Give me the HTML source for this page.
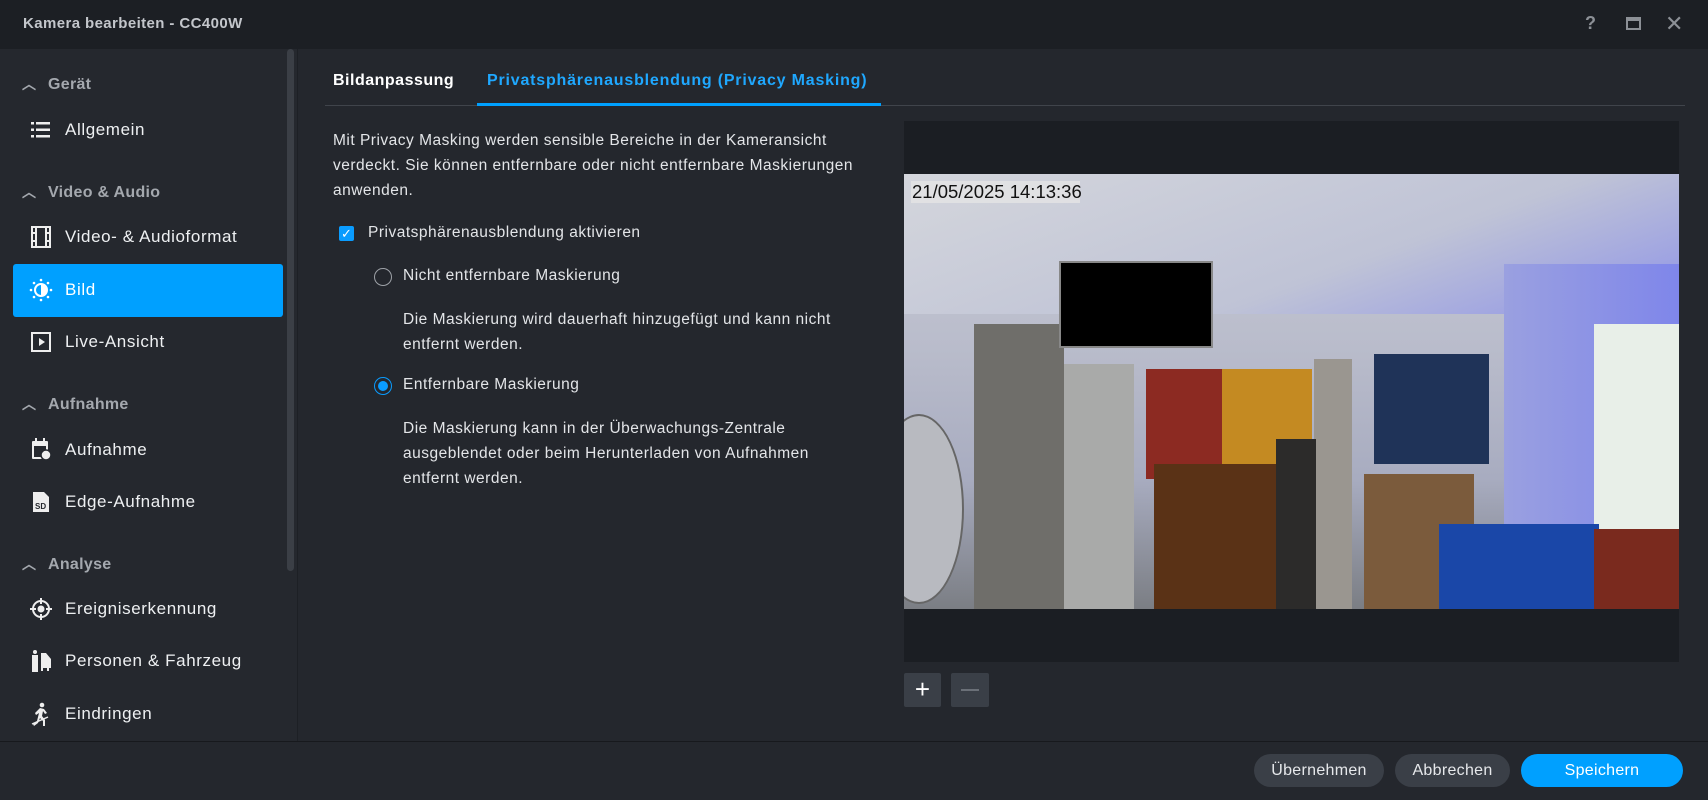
<!DOCTYPE html>
<html><head><meta charset="utf-8"><style>
*{margin:0;padding:0;box-sizing:border-box}
body{width:1708px;height:800px;overflow:hidden;background:#24272d;font-family:"Liberation Sans","DejaVu Sans",sans-serif;color:#e6e8eb;position:relative}
.a{position:absolute}
#title{left:0;top:0;width:1708px;height:49px;background:#1c1f24}
#title .t{left:23px;top:15px;font-size:15px;font-weight:bold;color:#c3c6cb;letter-spacing:0.4px}
#side{left:0;top:49px;width:298px;height:692px;background:#25282e;border-right:1px solid #1d2025}
.sb{left:287px;top:49px;width:7px;height:522px;background:#3b3f46;border-radius:4px}
.hdr{left:22px;font-size:16px;font-weight:bold;color:#a4a8ae;letter-spacing:0.3px}
.hdr span{display:inline-block;width:26px;color:#a4a8ae;font-size:14px}
.it{left:65px;font-size:17px;color:#eef0f2;letter-spacing:0.6px}
.ic{left:29px;width:24px;height:24px}
#sel{left:13px;top:264px;width:270px;height:53px;background:#00a0ff;border-radius:3px}
.c{font-size:15.5px;color:#e3e5e8;white-space:nowrap;letter-spacing:0.5px}
#foot{left:0;top:741px;width:1708px;height:59px;background:#24272d;border-top:1px solid #17191d}
.btn{top:754px;height:33px;border-radius:17px;font-size:16px;text-align:center;line-height:33px;color:#e6e8eb;background:#3a3f47;letter-spacing:0.3px}
</style></head><body>
<div id="title" class="a"><div class="t a">Kamera bearbeiten - CC400W</div>
<div class="a" style="left:1585px;top:13px;font-size:18px;font-weight:bold;color:#8c9096">?</div>
<div class="a" style="left:1626px;top:17px;width:15px;height:13px;border:2px solid #8c9096;border-top-width:4px"></div>
<div class="a" style="left:1665px;top:11px;font-size:22px;color:#8c9096">✕</div>
</div>
<div id="side" class="a"></div>
<div class="sb a"></div>
<div class="hdr a" style="top:74px"><span>︿</span>Gerät</div>
<svg class="ic a" style="top:118px" viewBox="0 0 24 24" fill="#eee"><rect x="2" y="4" width="3" height="2.5"/><rect x="7" y="4" width="14" height="2.5"/><rect x="2" y="10.5" width="3" height="2.5"/><rect x="7" y="10.5" width="14" height="2.5"/><rect x="2" y="17" width="3" height="2.5"/><rect x="7" y="17" width="14" height="2.5"/></svg>
<div class="it a" style="top:120px">Allgemein</div>
<div class="hdr a" style="top:182px"><span>︿</span>Video &amp; Audio</div>
<svg class="ic a" style="top:225px" viewBox="0 0 24 24" fill="none" stroke="#eee" stroke-width="2"><rect x="3" y="2" width="18" height="20"/><line x1="7" y1="2" x2="7" y2="22"/><line x1="17" y1="2" x2="17" y2="22"/><line x1="3" y1="8" x2="7" y2="8"/><line x1="3" y1="16" x2="7" y2="16"/><line x1="17" y1="8" x2="21" y2="8"/><line x1="17" y1="16" x2="21" y2="16"/></svg>
<div class="it a" style="top:227px">Video- &amp; Audioformat</div>
<div id="sel" class="a"></div>
<svg class="ic a" style="top:278px" viewBox="0 0 24 24"><circle cx="12" cy="12" r="6" fill="none" stroke="#fff" stroke-width="2"/><path d="M12 6a6 6 0 0 1 0 12z" fill="#fff"/><g fill="#fff"><circle cx="12" cy="2" r="1.3"/><circle cx="12" cy="22" r="1.3"/><circle cx="2" cy="12" r="1.3"/><circle cx="22" cy="12" r="1.3"/><circle cx="5" cy="5" r="1.3"/><circle cx="19" cy="5" r="1.3"/><circle cx="5" cy="19" r="1.3"/><circle cx="19" cy="19" r="1.3"/></g></svg>
<div class="it a" style="top:280px;color:#fff">Bild</div>
<svg class="ic a" style="top:330px" viewBox="0 0 24 24"><rect x="3" y="3" width="18" height="18" fill="none" stroke="#eee" stroke-width="2"/><path d="M10 8v8l6-4z" fill="#eee"/></svg>
<div class="it a" style="top:332px">Live-Ansicht</div>
<div class="hdr a" style="top:394px"><span>︿</span>Aufnahme</div>
<svg class="ic a" style="top:437px" viewBox="0 0 24 24" fill="#eee"><rect x="3" y="4" width="16" height="18" rx="1"/><rect x="6" y="1" width="2" height="5"/><rect x="14" y="1" width="2" height="5"/><rect x="5" y="9" width="12" height="11" fill="#25282e"/><circle cx="17" cy="18" r="5" fill="#eee" stroke="#25282e" stroke-width="1.5"/></svg>
<div class="it a" style="top:440px">Aufnahme</div>
<svg class="ic a" style="top:490px" viewBox="0 0 24 24"><path d="M4 2h11l5 5v15H4z" fill="#eee"/><text x="6" y="19" font-size="8" font-weight="bold" fill="#25282e" font-family="Liberation Sans">SD</text></svg>
<div class="it a" style="top:492px">Edge-Aufnahme</div>
<div class="hdr a" style="top:554px"><span>︿</span>Analyse</div>
<svg class="ic a" style="top:597px" viewBox="0 0 24 24" fill="none" stroke="#eee" stroke-width="2"><circle cx="12" cy="12" r="8"/><circle cx="12" cy="12" r="2.5" fill="#eee"/><path d="M12 1v6M12 17v6M1 12h6M17 12h6"/></svg>
<div class="it a" style="top:599px">Ereigniserkennung</div>
<svg class="ic a" style="top:649px" viewBox="0 0 24 24" fill="#eee"><circle cx="6" cy="3" r="2"/><rect x="3" y="6" width="6" height="17"/><path d="M12 4h5l5 6v9h-2v3h-2v-3h-4v3h-2z"/></svg>
<div class="it a" style="top:651px">Personen &amp; Fahrzeug</div>
<svg class="ic a" style="top:702px" viewBox="0 0 24 24" fill="#eee"><circle cx="13" cy="3" r="2.3"/><path d="M11 6l4 1 3 4-2 1-2-3-1 5 3 4v6h-2v-5l-3-3-2 5-4 3-1-2 4-3 2-8-3 2-1-2z"/><path d="M3 22l16-7" stroke="#eee" stroke-width="1.5"/></svg>
<div class="it a" style="top:704px">Eindringen</div>

<div class="a" style="left:325px;top:105px;width:1360px;height:1px;background:#40444b"></div>
<div class="a" style="left:333px;top:72px;font-size:16px;font-weight:bold;color:#fff;letter-spacing:0.5px">Bildanpassung</div>
<div class="a" style="left:487px;top:72px;font-size:16px;font-weight:bold;color:#1fa8ff;letter-spacing:0.8px;white-space:nowrap">Privatsphärenausblendung (Privacy Masking)</div>
<div class="a" style="left:477px;top:103px;width:404px;height:3px;background:#00a0ff"></div>

<div class="c a" style="left:333px;top:128px;line-height:25px">Mit Privacy Masking werden sensible Bereiche in der Kameransicht<br>verdeckt. Sie können entfernbare oder nicht entfernbare Maskierungen<br>anwenden.</div>
<div class="a" style="left:339px;top:226px;width:15px;height:15px;background:#0a9cff;border-radius:2px;color:#fff;font-size:13px;line-height:15px;text-align:center;font-weight:bold">✓</div>
<div class="c a" style="left:368px;top:224px">Privatsphärenausblendung aktivieren</div>
<div class="a" style="left:374px;top:268px;width:18px;height:18px;border:1.5px solid #9ea2a8;border-radius:50%"></div>
<div class="c a" style="left:403px;top:267px">Nicht entfernbare Maskierung</div>
<div class="c a" style="left:403px;top:307px;line-height:25px">Die Maskierung wird dauerhaft hinzugefügt und kann nicht<br>entfernt werden.</div>
<div class="a" style="left:374px;top:377px;width:18px;height:18px;border:1.5px solid #0a9cff;border-radius:50%"><div class="a" style="left:2.5px;top:2.5px;width:10px;height:10px;border-radius:50%;background:#0a9cff"></div></div>
<div class="c a" style="left:403px;top:376px">Entfernbare Maskierung</div>
<div class="c a" style="left:403px;top:416px;line-height:25px">Die Maskierung kann in der Überwachungs-Zentrale<br>ausgeblendet oder beim Herunterladen von Aufnahmen<br>entfernt werden.</div>

<div class="a" style="left:904px;top:121px;width:775px;height:541px;background:#1b1e23;overflow:hidden">
 <div class="a" style="left:0;top:53px;width:775px;height:435px;background:linear-gradient(180deg,#c9ccd6 0%,#b9bccb 40%,#a8acc0 70%,#7b7e84 100%);overflow:hidden">
  <div class="a" style="left:0;top:0;width:775px;height:140px;background:linear-gradient(160deg,#d4d6dc,#bfc3d6 60%,#8e93e8)"></div>
  <div class="a" style="left:600px;top:90px;width:175px;height:345px;background:linear-gradient(90deg,#9aa0e0,#7f86ea)"></div>
  <div class="a" style="left:690px;top:150px;width:85px;height:240px;background:#e8efe8"></div>
  <div class="a" style="left:-30px;top:240px;width:90px;height:190px;border-radius:50%;background:#b8bac0;border:2px solid #666"></div>
  <div class="a" style="left:70px;top:150px;width:90px;height:285px;background:#6f6e6a"></div>
  <div class="a" style="left:160px;top:190px;width:70px;height:245px;background:#a9aaa9"></div>
  <div class="a" style="left:242px;top:195px;width:76px;height:110px;background:#8c2a22"></div>
  <div class="a" style="left:318px;top:195px;width:90px;height:110px;background:#c48a22"></div>
  <div class="a" style="left:250px;top:290px;width:140px;height:145px;background:#5a3216"></div>
  <div class="a" style="left:410px;top:185px;width:38px;height:250px;background:#9a9690"></div>
  <div class="a" style="left:372px;top:265px;width:40px;height:170px;background:#2c2b2a"></div>
  <div class="a" style="left:470px;top:180px;width:115px;height:110px;background:#1f3358"></div>
  <div class="a" style="left:460px;top:300px;width:110px;height:135px;background:#7b5b3c"></div>
  <div class="a" style="left:535px;top:350px;width:160px;height:85px;background:#1a47a8"></div>
  <div class="a" style="left:690px;top:355px;width:85px;height:80px;background:#7a2a1e"></div>
  <div class="a" style="left:7px;top:7px;width:169px;height:22px;background:rgba(230,230,230,.75);color:#111;font-size:18.5px;line-height:22px;padding-left:1px;white-space:nowrap">21/05/2025 14:13:36</div>
 </div>
 <div class="a" style="left:155px;top:140px;width:154px;height:87px;background:#000;border:2px solid #888"></div>
</div>
<div class="a" style="left:904px;top:673px;width:37px;height:34px;background:#3a3f47;border-radius:2px;color:#fff;font-size:26px;text-align:center;line-height:32px">+</div>
<div class="a" style="left:951px;top:673px;width:38px;height:34px;background:#3a3f47;border-radius:2px"><div class="a" style="left:10px;top:16px;width:18px;height:1.5px;background:#6b7078"></div></div>

<div id="foot" class="a"></div>
<div class="btn a" style="left:1254px;width:130px">Übernehmen</div>
<div class="btn a" style="left:1395px;width:115px">Abbrechen</div>
<div class="btn a" style="left:1521px;width:162px;background:#00a0ff;color:#fff">Speichern</div>
</body></html>
